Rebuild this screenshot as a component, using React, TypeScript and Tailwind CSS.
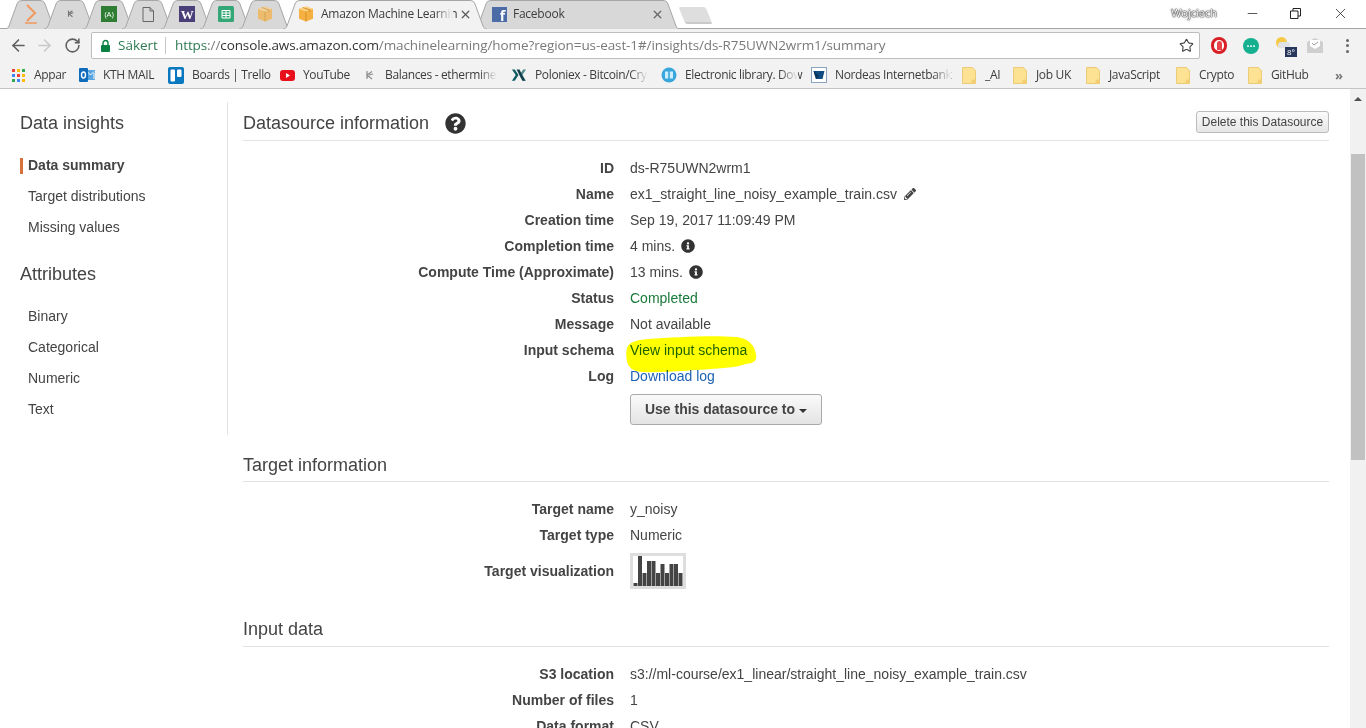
import React, { ReactNode } from 'react';
import { ArrowLeft, ArrowRight, RotateCw, Star, X, Minus } from 'lucide-react';
import { FaInfoCircle, FaPencilAlt, FaQuestionCircle } from 'react-icons/fa';

function tabPath(w: number) {
  return `M0 29 C2 29 3 28 4 26 L12 4 C13 1 15 0.5 18 0.5 H${w - 18} C${w - 15} 0.5 ${w - 13} 1 ${w - 12} 4 L${w - 4} 26 C${w - 3} 28 ${w - 2} 29 ${w} 29`;
}

function TabShape({ width, fill }: { width: number; fill: string }) {
  return (
    <svg className="absolute top-0 left-0" width={width} height={29} viewBox={`0 0 ${width} 29`}>
      <path d={tabPath(width)} fill={fill} stroke="#a6a6a6" strokeWidth="1" />
    </svg>
  );
}

function PinnedTab({ children }: { children: ReactNode }) {
  return (
    <div className="relative -ml-[13px] flex h-[29px] w-[52px] shrink-0 items-center justify-center first:ml-[5px]">
      <TabShape width={52} fill="#d8d8d8" />
      <div className="relative -mt-px">{children}</div>
    </div>
  );
}

function AwsCube({ size = 16, opacity = 1 }: { size?: number; opacity?: number }) {
  return (
    <svg width={size} height={size} viewBox="0 0 16 16" opacity={opacity}>
      <path d="M8 .5 15 3v9.8L8 15.5 1 12.8V3z" fill="#f5b041" />
      <path d="M8 5.6 1 3l7-2.5L15 3z" fill="#fbd38a" />
      <path d="M7.6 5.6h.8v9.8h-.8z" fill="#c98a1e" />
      <path d="M4 1.8 11 4.3v2l1.3-.5V3.6L5.4 1.2z" fill="#d8912a" />
    </svg>
  );
}

function Folder() {
  return (
    <svg width="14" height="17" viewBox="0 0 14 17">
      <path d="M.5.5h10l3 3v13H.5z" fill="#fde293" stroke="#eccb76" strokeWidth="1" />
      <path d="M10 12.5h3.500v4H9z" fill="#f3cf72" />
    </svg>
  );
}

const bookmarks: { label: string; width: string; next: string; fade?: boolean; icon: ReactNode }[] = [
  {
    label: 'Appar',
    width: 'w-[33px]',
    next: 'mr-[12px]',
    icon: (
      <svg width="15" height="15" viewBox="0 0 15 15">
        {[
          ['#ea4335', 1, 1], ['#fbbc05', 6, 1], ['#34a853', 11, 1],
          ['#4285f4', 1, 6], ['#ea4335', 6, 6], ['#fbbc05', 11, 6],
          ['#34a853', 1, 11], ['#4285f4', 6, 11], ['#fbbc05', 11, 11],
        ].map(([c, x, y], i) => (
          <rect key={i} x={x as number} y={y as number} width="3" height="3" fill={c as string} />
        ))}
      </svg>
    ),
  },
  {
    label: 'KTH MAIL',
    width: 'w-[54px]',
    next: 'mr-[11px]',
    icon: (
      <svg width="16" height="16" viewBox="0 0 16 16">
        <rect x="7" y="3" width="9" height="10" fill="#5aa5e0" />
        <path d="M8 4.500 11.500 8 15 4.500M8 12V6M15 12V6" stroke="#fff" strokeWidth="1" fill="none" />
        <rect y="1" width="9" height="14" rx="1" fill="#0f6cbd" />
        <ellipse cx="4.500" cy="8" rx="2" ry="3" fill="none" stroke="#fff" strokeWidth="1.400" />
      </svg>
    ),
  },
  {
    label: 'Boards | Trello',
    width: 'w-[79px]',
    next: 'mr-[8px]',
    icon: (
      <svg width="16" height="17" viewBox="0 0 16 17">
        <rect width="16" height="17" rx="2" fill="#0a78bf" />
        <rect x="2.500" y="2.500" width="4.500" height="12" rx="1" fill="#fff" />
        <rect x="9" y="2.500" width="4.500" height="7.500" rx="1" fill="#fff" />
      </svg>
    ),
  },
  {
    label: 'YouTube',
    width: 'w-[48px]',
    next: 'mr-[10px]',
    icon: (
      <svg width="15" height="15" viewBox="0 0 15 15">
        <rect y="2" width="15" height="11" rx="3" fill="#e8101a" />
        <path d="M6 5v5l4-2.500z" fill="#fff" />
      </svg>
    ),
  },
  {
    label: 'Balances - ethermine',
    width: 'w-[112px]',
    next: 'mr-[14px]',
    fade: true,
    icon: (
      <svg width="11" height="15" viewBox="0 0 11 15">
        <path d="M8 3.500 3 7l5 4M3 3v8M5 7l4-1" stroke="#8c8c8c" strokeWidth="1.200" fill="none" />
      </svg>
    ),
  },
  {
    label: 'Poloniex - Bitcoin/Cry',
    width: 'w-[113px]',
    next: 'mr-[13px]',
    fade: true,
    icon: (
      <svg width="17" height="15" viewBox="0 0 17 15">
        <path d="M1 1h3l4 6-4 6H1l4-6z" fill="#0d5c63" />
        <path d="M16 1h-3L9 7l4 6h3l-4-6z" fill="#4f8a8b" />
        <path d="M6 1h3l6 12h-3z" fill="#123f4a" />
      </svg>
    ),
  },
  {
    label: 'Electronic library. Dow',
    width: 'w-[113px]',
    next: 'mr-[13px]',
    fade: true,
    icon: (
      <svg width="16" height="16" viewBox="0 0 16 16">
        <circle cx="8" cy="8" r="7.500" fill="#39a7dc" />
        <rect x="4" y="4.500" width="3.200" height="7" fill="#cfeefb" />
        <rect x="8.800" y="4.500" width="3.200" height="7" fill="#cfeefb" />
      </svg>
    ),
  },
  {
    label: 'Nordeas Internetbank',
    width: 'w-[116px]',
    next: 'mr-[10px]',
    fade: true,
    icon: (
      <svg width="16" height="16" viewBox="0 0 16 16">
        <rect x=".5" y=".5" width="15" height="15" fill="#fff" stroke="#8aa4bd" />
        <path d="M2.500 4h11l-2 8H5z" fill="#0f4c81" />
        <path d="M2.500 4 8 9l-3 3z" fill="#0a3358" />
      </svg>
    ),
  },
  { label: '_AI', width: 'w-[17px]', next: 'mr-[10px]', icon: <Folder /> },
  { label: 'Job UK', width: 'w-[40px]', next: 'mr-[9px]', icon: <Folder /> },
  { label: 'JavaScript', width: 'w-[54px]', next: 'mr-[12px]', icon: <Folder /> },
  { label: 'Crypto', width: 'w-[37px]', next: 'mr-[11px]', icon: <Folder /> },
  { label: 'GitHub', width: 'w-[46px]', next: 'mr-0', icon: <Folder /> },
];

function Toolbar() {
  return (
    <div className="flex h-[33px] items-center bg-[#f2f2f2] pl-[9px]">
      <ArrowLeft size={19} strokeWidth={2} className="text-[#5f5f5f]" />
      <ArrowRight size={19} strokeWidth={2} className="ml-[7px] text-[#c9c9c9]" />
      <RotateCw size={17} strokeWidth={2.200} className="ml-[10px] text-[#5f5f5f]" />
      <div className="ml-[10px] flex h-[27px] w-[1109px] items-center rounded-[2px] border border-[#bdbdbd] bg-white pl-[8px] text-[13.5px]">
        <svg width="11" height="14" viewBox="0 0 11 14">
          <path d="M3 6V4a2.500 2.500 0 0 1 5 0v2" fill="none" stroke="#0b8043" strokeWidth="1.400" />
          <rect x="1" y="6" width="9" height="7" rx="1" fill="#0b8043" />
        </svg>
        <span className="ml-[7px] w-[38px] text-[#2c7a51]">Säkert</span>
        <span className="mx-[9px] h-[17px] w-px bg-[#c8c8c8]" />
        <span className="whitespace-nowrap tracking-[-0.1px] text-[#7a7a7a]">
          <span className="text-[#2c7a51]">https</span>
          ://<span className="text-[#333]">console.aws.amazon.com</span>
          /machinelearning/home?region=us-east-1#/insights/ds-R75UWN2wrm1/summary
        </span>
        <Star size={15} strokeWidth={1.800} className="mr-[5px] ml-auto text-[#444]" />
      </div>
      <div className="ml-[11px] flex h-[17px] w-[16px] items-center justify-center rounded-full border-[3px] border-[#d81f26] bg-white">
        <div className="h-[9px] w-[5px] rounded-t-full bg-[#e8454a]" />
      </div>
      <div className="ml-[16px] flex h-[16px] w-[16px] items-center justify-center rounded-full bg-[#15b08f] text-[8px] leading-none text-white">
        •••
      </div>
      <div className="relative ml-[17px] h-[20px] w-[20px]">
        <div className="absolute top-[1px] left-0 h-[11px] w-[11px] rounded-full bg-[#f6c945]" />
        <div className="absolute top-[6px] left-[2px] h-[6px] w-[12px] rounded-full bg-[#dfe3e8]" />
        <div className="absolute top-[11px] left-[9px] flex h-[10px] w-[12px] items-center justify-center bg-[#27365a] text-[8px] leading-none text-white">
          8°
        </div>
      </div>
      <svg className="ml-[11px]" width="16" height="15" viewBox="0 0 16 15">
        <path d="M0 4 8 0l8 4v11H0z" fill="#cfcfcf" />
        <path d="M3 2h10v6l-5 3-5-3z" fill="#fff" />
        <path d="M5 5l2 2 4-3" stroke="#9a9a9a" fill="none" />
      </svg>
      <div className="ml-[23px] flex flex-col gap-[2.500px]">
        <span className="h-[3px] w-[3px] rounded-full bg-[#666]" />
        <span className="h-[3px] w-[3px] rounded-full bg-[#666]" />
        <span className="h-[3px] w-[3px] rounded-full bg-[#666]" />
      </div>
    </div>
  );
}

function BookmarkBar() {
  return (
    <div className="flex h-[27px] items-center border-b border-[#c4c4c4] bg-[#f2f2f2] pl-[10px] text-[12px] tracking-[-0.35px] text-[#3c3c3c]">
      {bookmarks.map((b) => (
        <div key={b.label} className={`flex items-center ${b.next}`}>
          <span className="mr-[8px] flex w-[16px] justify-center">{b.icon}</span>
          <span className={`relative whitespace-nowrap ${b.width}`}>
            {b.label}
            {b.fade && (
              <span className="absolute top-0 right-0 h-full w-[18px] bg-linear-to-r from-transparent to-[#f2f2f2]" />
            )}
          </span>
        </div>
      ))}
      <span className="ml-[18px] text-[13px] leading-none font-bold text-[#777]">»</span>
    </div>
  );
}

function TabStrip() {
  return (
    <div className="flex h-[29px] items-start border-b border-[#a6a6a6] bg-white text-[12px] tracking-[-0.25px] text-[#3c3c3c]">
      <PinnedTab>
        <svg width="14" height="22" viewBox="0 0 14 22">
          <path d="M3 2l8 8-8 8" fill="none" stroke="#f0995e" strokeWidth="2" />
          <path d="M1 20h12" stroke="#f0995e" strokeWidth="1.500" />
        </svg>
      </PinnedTab>
      <PinnedTab>
        <svg width="11" height="12" viewBox="0 0 11 15">
          <path d="M8 3.500 3 7l5 4M3 3v8M5 7l4-1" stroke="#777" strokeWidth="1.400" fill="none" />
        </svg>
      </PinnedTab>
      <PinnedTab>
        <div className="flex h-[16px] w-[16px] items-center justify-center bg-[#2f7d32] text-[8px] leading-none text-white">
          (A)
        </div>
      </PinnedTab>
      <PinnedTab>
        <svg width="12" height="15" viewBox="0 0 12 15">
          <path d="M1 .5h7l3.500 3.500v10.500H1zM8 .5V4h3.500" fill="none" stroke="#666" strokeWidth="1" />
        </svg>
      </PinnedTab>
      <PinnedTab>
        <div className="flex h-[16px] w-[16px] items-center justify-center bg-[#4b3f7a] font-['Liberation_Serif',serif] text-[13px] leading-none font-bold text-white">
          W
        </div>
      </PinnedTab>
      <PinnedTab>
        <svg width="16" height="16" viewBox="0 0 16 16">
          <rect width="16" height="16" rx="1.500" fill="#33a876" />
          <path d="M4 4.500h8v7.500H4zM4 7h8M4 9.500h8M8 4.500V12" fill="none" stroke="#fff" strokeWidth="1" />
        </svg>
      </PinnedTab>
      <PinnedTab>
        <AwsCube opacity={0.7} />
      </PinnedTab>

      <div className="relative z-10 ml-[-8px] flex h-[29px] w-[204px] shrink-0 items-center pl-[15px]">
        <TabShape width={204} fill="#f2f2f2" />
        <div className="relative -mt-px flex items-center">
          <AwsCube />
          <span className="relative ml-[7px] w-[132px] whitespace-nowrap">
            Amazon Machine Learnin
            <span className="absolute top-0 right-0 h-full w-[18px] bg-linear-to-r from-transparent to-[#f2f2f2]" />
          </span>
          <X size={13} strokeWidth={2.400} className="ml-[6px] text-[#5a5a5a]" />
        </div>
      </div>

      <div className="relative -ml-[13px] flex h-[29px] w-[206px] shrink-0 items-center pl-[18px]">
        <TabShape width={206} fill="#d8d8d8" />
        <div className="relative -mt-px flex items-center">
          <div className="flex h-[15px] w-[15px] items-center justify-end bg-[#4c6ca8] pt-[2px] pr-[2px] text-[14px] leading-[13px] font-bold text-white">
            f
          </div>
          <span className="ml-[6px] w-[138px] whitespace-nowrap">Facebook</span>
          <X size={13} strokeWidth={2.400} className="text-[#666]" />
        </div>
      </div>

      <div className="mt-[7px] ml-[2px] h-[17px] w-[27px] shrink-0 skew-x-[22deg] rounded-[2px] border-b-2 border-[#c9c9c9] bg-[#dedede]" />

      <span className="mt-[7px] ml-auto text-[11px] leading-none tracking-normal text-white [text-shadow:0_0_2px_#222,0_0_1px_#222,0_0_1px_#222]">
        Wojciech
      </span>
      <Minus size={15} strokeWidth={1.200} className="mt-[6px] ml-[28px] text-[#222]" />
      <svg className="mt-[8px] ml-[30px]" width="11" height="11" viewBox="0 0 11 11">
        <path d="M.5 3h7.500v7.500H.5zM3 3V.5h7.500V8H8" fill="none" stroke="#222" strokeWidth="1" />
      </svg>
      <X size={17} strokeWidth={1.100} className="mt-[5px] mr-[17px] ml-[31px] text-[#222]" />
    </div>
  );
}

function Sidebar() {
  const item = 'flex h-[31px] items-center pl-[8px] text-[14px] text-[#444]';
  return (
    <aside className="h-[333px] w-[228px] shrink-0 border-r border-[#e4e4e4] pt-[9px] pl-[20px]">
      <h2 className="text-[18px] leading-[24px] text-[#444]">Data insights</h2>
      <nav className="mt-[15px]">
        <div className="relative flex h-[31px] items-center pl-[8px] text-[14px] font-bold text-[#444]">
          <span className="absolute left-0 h-[16px] w-[3px] bg-[#d9713c]" />
          Data summary
        </div>
        <div className={item}>Target distributions</div>
        <div className={item}>Missing values</div>
      </nav>
      <h2 className="mt-[19px] text-[18px] leading-[24px] text-[#444]">Attributes</h2>
      <nav className="mt-[15px]">
        <div className={item}>Binary</div>
        <div className={item}>Categorical</div>
        <div className={item}>Numeric</div>
        <div className={item}>Text</div>
      </nav>
    </aside>
  );
}

function SectionTitle({ children, tight }: { children: ReactNode; tight?: boolean }) {
  return (
    <div className={`relative flex items-center border-b border-[#e2e2e2] text-[18px] leading-[24px] text-[#444] ${tight ? 'pb-[4px]' : 'pb-[5px]'}`}>
      {children}
    </div>
  );
}

function Row({ label, children, tall }: { label: string; children: ReactNode; tall?: boolean }) {
  return (
    <div className={`grid grid-cols-[371px_1fr] items-center gap-x-[16px] ${tall ? 'mt-[5px] h-[36px]' : 'h-[26px]'}`}>
      <div className="text-right font-bold text-[#444]">{label}</div>
      <div className="flex items-center text-[#444]">{children}</div>
    </div>
  );
}

function Thumbnail() {
  const bars = [3, 30, 13, 25, 25, 13, 22, 13, 22, 22, 13];
  return (
    <svg width="56" height="36" viewBox="0 0 56 36">
      <rect width="56" height="36" fill="#dedede" />
      <rect x="3" y="3" width="50" height="30" fill="#fff" />
      {bars.map((h, i) => (
        <rect key={i} x={3.500 + i * 4.500} y={33 - h} width="4" height={h} fill="#444" />
      ))}
    </svg>
  );
}

function Content() {
  return (
    <main className="ml-[15px] w-[1086px] shrink-0 pt-[22px] text-[14px]">
      <SectionTitle>
        Datasource information
        <FaQuestionCircle size={21} className="ml-[16px] text-[#333]" />
        <button className="absolute top-0 right-0 h-[22px] w-[133px] rounded-[3px] border border-[#bbb] bg-linear-to-b from-[#fafafa] to-[#e6e6e6] text-[12px] leading-none text-[#444]">
          Delete this Datasource
        </button>
      </SectionTitle>

      <section className="mt-[14px]">
        <Row label="ID">ds-R75UWN2wrm1</Row>
        <Row label="Name">
          ex1_straight_line_noisy_example_train.csv
          <FaPencilAlt size={12} className="ml-[7px] text-[#444]" />
        </Row>
        <Row label="Creation time">Sep 19, 2017 11:09:49 PM</Row>
        <Row label="Completion time">
          4 mins.
          <FaInfoCircle size={14} className="ml-[6px] text-[#333]" />
        </Row>
        <Row label="Compute Time (Approximate)">
          13 mins.
          <FaInfoCircle size={14} className="ml-[6px] text-[#333]" />
        </Row>
        <Row label="Status">
          <span className="text-[#1a7a3a]">Completed</span>
        </Row>
        <Row label="Message">Not available</Row>
        <Row label="Input schema">
          <span className="text-[#1e62b4]">View input schema</span>
        </Row>
        <Row label="Log">
          <span className="text-[#1e62b4]">Download log</span>
        </Row>
        <div className="relative mt-[5px] ml-[387px] h-[31px] w-[192px]">
          <button className="flex h-full w-full items-center justify-center rounded-[3px] border border-[#aaa] bg-linear-to-b from-[#fafafa] to-[#e4e4e4] font-bold text-[#444]">
            Use this datasource to
            <span className="mt-[2px] ml-[4px] border-x-[4px] border-t-[4px] border-x-transparent border-t-[#333]" />
          </button>
        </div>
      </section>

      <div className="mt-[28px]">
        <SectionTitle tight>Target information</SectionTitle>
      </div>
      <section className="mt-[14px]">
        <Row label="Target name">y_noisy</Row>
        <Row label="Target type">Numeric</Row>
        <Row label="Target visualization" tall>
          <Thumbnail />
        </Row>
      </section>

      <div className="mt-[28px]">
        <SectionTitle>Input data</SectionTitle>
      </div>
      <section className="mt-[14px]">
        <Row label="S3 location">s3://ml-course/ex1_linear/straight_line_noisy_example_train.csv</Row>
        <Row label="Number of files">1</Row>
        <Row label="Data format">CSV</Row>
      </section>
    </main>
  );
}

function Scrollbar() {
  return (
    <div className="ml-auto flex h-full w-[16px] shrink-0 flex-col items-center bg-[#f1f1f1]">
      <span className="mt-[8px] border-x-[4px] border-b-[4px] border-x-transparent border-b-[#505050]" />
      <div className="mt-[53px] h-[306px] w-[14px] bg-[#c1c1c1]" />
    </div>
  );
}

export default function App() {
  return (
    <div className="relative flex h-[728px] w-[1366px] flex-col overflow-hidden bg-white font-['Liberation_Sans',Arial,sans-serif]">
      <header className="shrink-0 font-['Open_Sans',sans-serif]">
        <TabStrip />
        <Toolbar />
        <BookmarkBar />
      </header>
      <div className="flex min-h-0 flex-1 items-start">
        <div className="pt-[13px]">
          <Sidebar />
        </div>
        <Content />
        <Scrollbar />
      </div>
      {/* marker pen stroke over the schema link */}
      <svg className="pointer-events-none absolute top-[333px] left-[624px] mix-blend-multiply" width="136" height="42" viewBox="0 0 136 42">
        <path
          d="M3 15 C5 9 12 7 24 6 C50 4 90 2 112 4 C124 5 131 12 132 22 C133 28 130 30 122 31 C115 33 112 34 100 35 C70 37 40 40 18 39 C8 38 4 34 3 28 C2 24 2 19 3 15z"
          fill="#ffff00"
        />
      </svg>
    </div>
  );
}
